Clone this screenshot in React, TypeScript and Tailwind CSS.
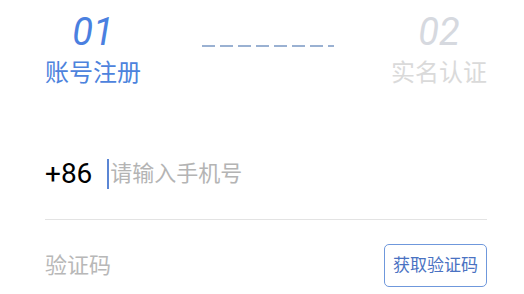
export default function App() {
  return (
    <div className="w-[524px] h-[294px] overflow-hidden bg-white pl-[45px] pr-[37px] pt-[13px] font-['Roboto','Noto_Sans_CJK_SC',sans-serif]">
      {/* steps */}
      <div className="flex items-start justify-between">
        <div className="flex w-[96px] flex-col items-center">
          <span className="text-[38px] leading-[38px] italic text-[#4a80e0]">01</span>
          <span className="mt-[10px] text-[24px] leading-[24px] text-[#4d83dd]">账号注册</span>
        </div>
        <svg width="132" height="2" className="mt-[32px] ml-[3px]">
          <line x1="0" y1="1" x2="132" y2="1" stroke="#9ab1d2" strokeWidth="2" strokeDasharray="13 5" />
        </svg>
        <div className="flex w-[96px] flex-col items-center">
          <span className="text-[38px] leading-[38px] italic text-[#d6d9df]">02</span>
          <span className="mt-[10px] text-[24px] leading-[24px] text-[#dadada]">实名认证</span>
        </div>
      </div>

      {/* phone */}
      <div className="mt-[74px] flex h-[30px] items-center">
        <span className="text-[28px] leading-[28px] text-black">+86</span>
        <div className="ml-[15px] h-[30px] w-[2px] bg-[#5b86d4]" />
        <span className="ml-[1px] text-[22px] leading-[22px] text-[#b4b4b4]">请输入手机号</span>
      </div>
      <div className="mt-[30px] h-px bg-[#e3e3e3]" />

      {/* code */}
      <div className="mt-[24px] flex items-center justify-between">
        <span className="text-[22px] leading-[22px] text-[#b8b8b8]">验证码</span>
        <button className="flex h-[43px] w-[103px] items-center justify-center rounded-[5px] border border-[#6f98dc] text-[17px] text-[#4a72c2]">
          获取验证码
        </button>
      </div>
    </div>
  );
}
